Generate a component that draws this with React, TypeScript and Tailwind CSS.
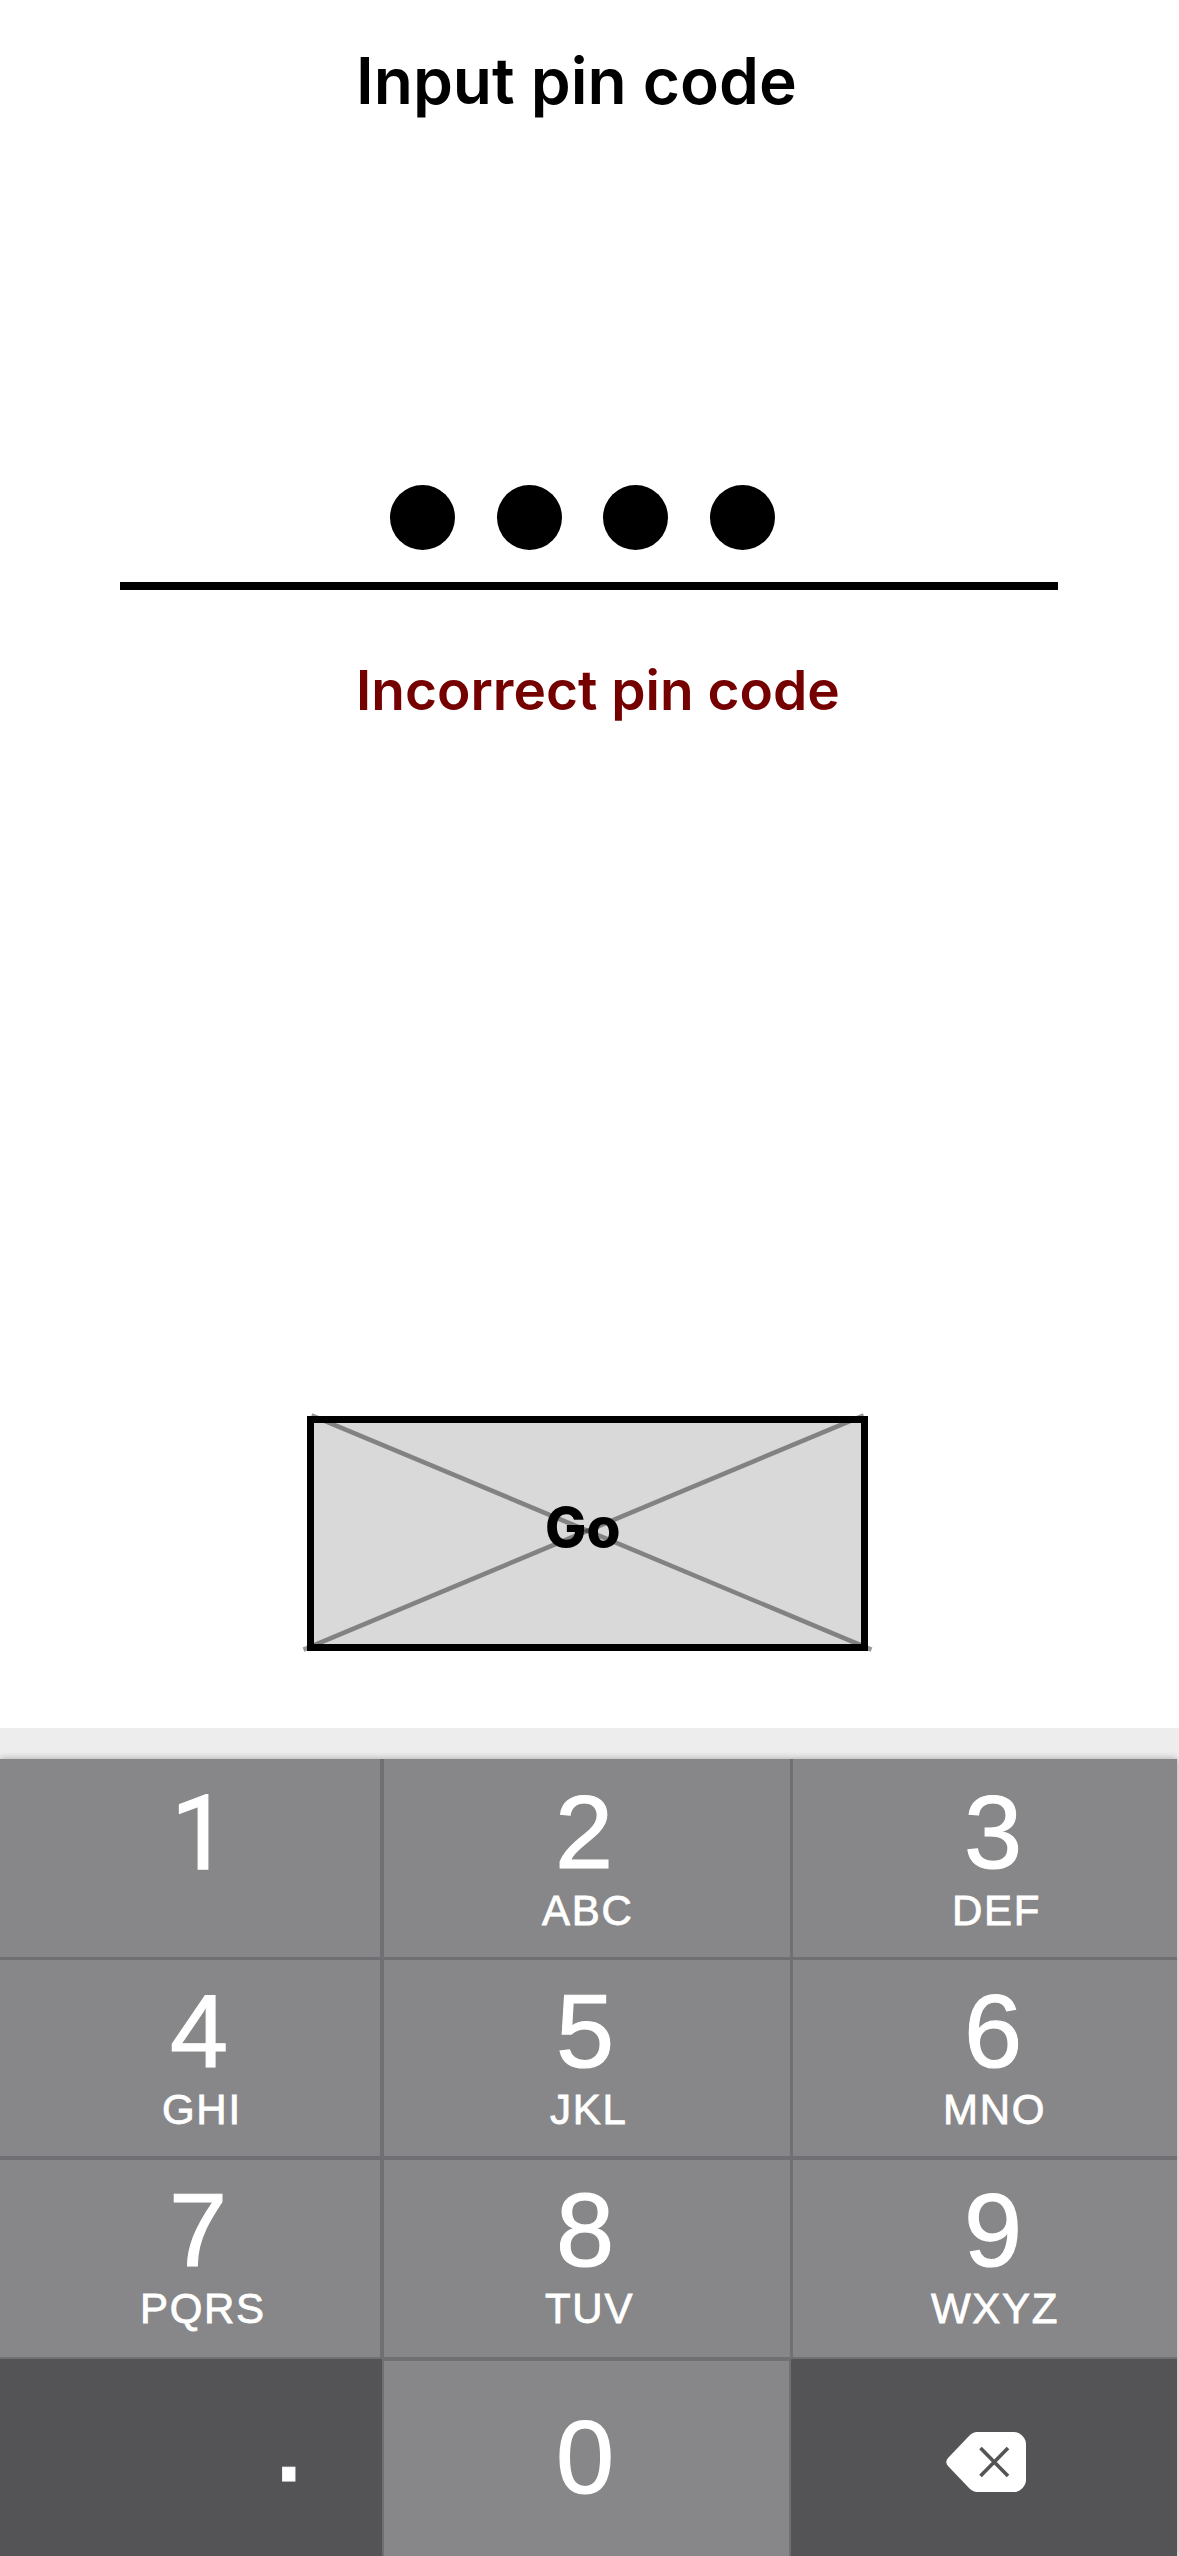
type Key = {
  digit: string;
  letters?: string;
  cell: string;
  digitClass: string;
  lettersClass?: string;
};

const DIGIT = "w-fit text-[104.5px] leading-[100px] h-[100px] [-webkit-text-stroke:1.2px_white]";
const ONE = "w-fit font-['Roboto'] text-[103px] leading-[100px] h-[100px] [-webkit-text-stroke:1.4px_white]";
const LETTERS = "mt-[4px] w-fit text-[42px] leading-[50px] tracking-[1.7px] whitespace-nowrap [-webkit-text-stroke:0.8px_white]";

const rows: { height: string; pad: string; keys: Key[] }[] = [
  {
    height: "h-[201px]",
    pad: "border-b-3 pt-[23px]",
    keys: [
      { digit: "1", cell: "w-[384px] border-r-4", digitClass: "mt-[2px] ml-[171px]" },
      { digit: "2", letters: "ABC", cell: "w-[409px] border-r-[3px]", digitClass: "ml-[171px]", lettersClass: "ml-[158px]" },
      { digit: "3", letters: "DEF", cell: "w-[384px]", digitClass: "ml-[171px]", lettersClass: "ml-[159px]" },
    ],
  },
  {
    height: "h-[200px]",
    pad: "border-b-4 pt-[21px]",
    keys: [
      { digit: "4", letters: "GHI", cell: "w-[384px] border-r-4", digitClass: "ml-[170px]", lettersClass: "ml-[162px]" },
      { digit: "5", letters: "JKL", cell: "w-[409px] border-r-[3px]", digitClass: "ml-[172px]", lettersClass: "ml-[166px]" },
      { digit: "6", letters: "MNO", cell: "w-[384px]", digitClass: "ml-[171px]", lettersClass: "ml-[150px]" },
    ],
  },
  {
    height: "h-[201px]",
    pad: "border-b-4 pt-[20px]",
    keys: [
      { digit: "7", letters: "PQRS", cell: "w-[384px] border-r-4", digitClass: "ml-[169px]", lettersClass: "ml-[140px]" },
      { digit: "8", letters: "TUV", cell: "w-[409px] border-r-[3px]", digitClass: "ml-[172px]", lettersClass: "ml-[161px]" },
      { digit: "9", letters: "WXYZ", cell: "w-[384px]", digitClass: "ml-[171px]", lettersClass: "ml-[138px]" },
    ],
  },
];

function PadKey({ k, pad }: { k: Key; pad: string }) {
  return (
    <button className={`flex h-full shrink-0 flex-col items-start border-[#707074] bg-[#878789] ${pad} ${k.cell}`}>
      <span className={`${k.digit === "1" ? ONE : DIGIT} ${k.digitClass}`}>{k.digit}</span>
      {k.letters && <span className={`${LETTERS} ${k.lettersClass}`}>{k.letters}</span>}
    </button>
  );
}

function Backspace() {
  return (
    <svg width="80" height="60" viewBox="0 0 80 60" fill="none">
      <path d="M31 0H68C74 0 80 6 80 12V48C80 54 74 60 68 60H31Q27 60 23 56L2 34Q-1.5 30 2 26L23 4Q27 0 31 0Z" fill="#fff" />
      <path d="M34.5 16L62 44M62 16L34.5 44" stroke="#545456" strokeWidth="3.6" />
    </svg>
  );
}

export default function App() {
  return (
    <main className="flex h-[2556px] w-[1179px] flex-col overflow-hidden bg-white font-['Inter',sans-serif] text-black">
      <h1 className="mt-[42px] ml-[356px] h-[77px] text-[64px] leading-[77px] font-semibold whitespace-nowrap">Input pin code</h1>

      <div className="mt-[366px] ml-[120px] flex h-[105px] w-[938px] justify-start gap-[41.67px] border-b-8 border-black pl-[270px]">
        {[0, 1, 2, 3].map((i) => (
          <span key={i} className="size-[65px] shrink-0 rounded-full bg-black" />
        ))}
      </div>

      <p className="mt-[67px] ml-[356px] h-[67px] text-[55px] leading-[67px] font-semibold whitespace-nowrap text-[#740000]">Incorrect pin code</p>

      <button className="relative mt-[692px] ml-[307px] flex h-[235px] w-[561px] shrink-0 items-start border-[7px] border-black bg-[#d9d9d9] pt-[71px] text-left">
        <span className="ml-[231px] block text-[55px] leading-[67px] font-extrabold">Go</span>
        <svg className="absolute top-[-13px] left-[-14px]" width="575" height="247" viewBox="300 1410 575 247" fill="none">
          <g stroke="#000" strokeOpacity="0.4" strokeWidth="4.6">
            <path d="M311.5 1415.3L871.5 1649.6" />
            <path d="M303.5 1649.6L863.7 1415.3" />
          </g>
        </svg>
      </button>

      <section className="mt-[77px] flex h-[828px] shrink-0 flex-col bg-[#ededed] pt-[31px] font-['Liberation_Sans',Arial,sans-serif] text-white">
        <div className="w-[1177px] shadow-[0_0_7px_rgba(0,0,0,0.3)]">
          {rows.map((row) => (
            <div key={row.keys[0].digit} className={`flex ${row.height}`}>
              {row.keys.map((k) => (
                <PadKey key={k.digit} k={k} pad={row.pad} />
              ))}
            </div>
          ))}
          <div className="flex h-[195px]">
            <button className="mt-[-2px] flex w-[382px] shrink-0 items-start bg-[#545456] pt-[28px] pl-[271px] text-[128px] leading-[100px] [-webkit-text-stroke:1px_white]">.</button>
            <button className="flex w-[409px] shrink-0 items-start border-x-2 border-[#707074] bg-[#878789] pt-[46px] pl-[172px] text-[104.5px] leading-[100px] [-webkit-text-stroke:1.2px_white]">0</button>
            <button className="mt-[-2px] flex w-[386px] shrink-0 items-start bg-[#545456] pt-[73px] pl-[155px]" aria-label="Delete">
              <Backspace />
            </button>
          </div>
        </div>
      </section>
    </main>
  );
}
